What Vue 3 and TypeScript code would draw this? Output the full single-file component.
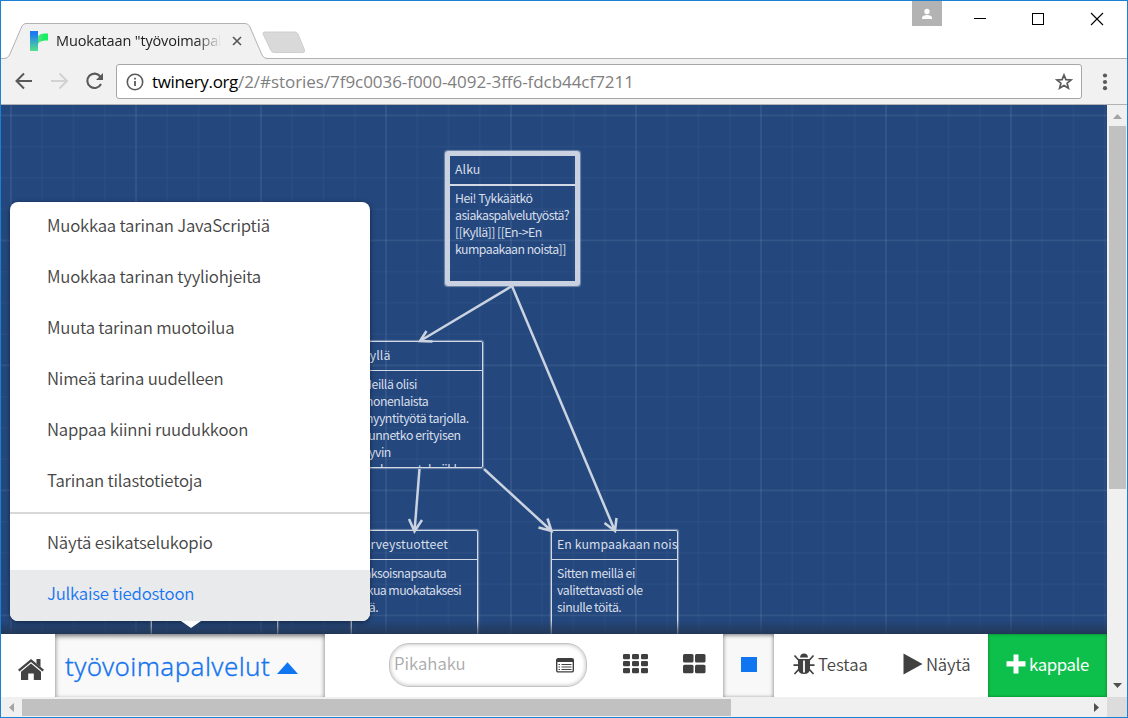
<script setup lang="ts">
interface MenuEntry {
  label: string
  active?: boolean
}

interface Passage {
  id: string
  title: string
  lines: string[]
}

const editEntries: MenuEntry[] = [
  { label: 'Muokkaa tarinan JavaScriptiä' },
  { label: 'Muokkaa tarinan tyyliohjeita' },
  { label: 'Muuta tarinan muotoilua' },
  { label: 'Nimeä tarina uudelleen' },
  { label: 'Nappaa kiinni ruudukkoon' },
  { label: 'Tarinan tilastotietoja' },
]

const outputEntries: MenuEntry[] = [
  { label: 'Näytä esikatselukopio' },
  { label: 'Julkaise tiedostoon', active: true },
]

const passages: Passage[] = [
  {
    id: 'start',
    title: 'Alku',
    lines: ['Hei! Tykkäätkö', 'asiakaspalvelutyöstä?', '[[Kyllä]] [[En->En', 'kumpaakaan noista]]'],
  },
  {
    id: 'yes',
    title: 'Kyllä',
    lines: ['Meillä olisi', 'monenlaista', 'myyntityötä tarjolla.', 'Tunnetko erityisen', 'hyvin', 'mukavuustekniikka'],
  },
  { id: 'health', title: 'Terveystuotteet', lines: ['Kaksoisnapsauta', 'lukua muokataksesi', 'sitä.'] },
  { id: 'neither', title: 'En kumpaakaan noista', lines: ['Sitten meillä ei', 'valitettavasti ole', 'sinulle töitä.'] },
  { id: 'hidden', title: '', lines: [] },
]

const links: string[] = [
  'M512 286L420 341M426.5 331L420 341L432.5 341.5',
  'M512 286L615 531M604.5 523L615 531L616.5 518',
  'M419.5 469L414.5 531.5M409 519L414.5 531.5L422 520',
  'M484 469L551.5 531M538.5 527.5L551.5 531L547.5 518.5',
]

const gridStep = 31.25
const columns = Array.from({ length: 36 }, (_, i) => ({ at: 11 + i * gridStep, major: i % 4 === 0 }))
const rows = Array.from({ length: 17 }, (_, i) => ({ at: 115.2 + i * gridStep, major: i % 4 === 0 }))
</script>

<template>
  <div class="window">
    <header class="titlebar">
      <svg class="tab-shape" width="310" height="58" viewBox="1 1 310 58">
        <path d="M1 59V58.5H4Q8 58.5 9.500 55L22 26Q23.500 23.500 26 23.500H245Q248 23.500 249.500 26L262 55Q264 58.500 267 58.500H311V59Z" fill="#f1f1f1" />
        <path d="M1 58.500H4Q8 58.500 9.500 55L22 26Q23.500 23.500 26 23.500H245Q248 23.500 249.500 26L262 55Q264 58.500 267 58.500H311" fill="none" stroke="#b2b2b2" />
        <path d="M265 32H295Q297 32 298 34L304.500 50Q305 52.500 303 52.500H274Q272 52.500 271 50.500L263 34Q262.500 32 265 32Z" fill="#d9d9d9" stroke="#cecece" />
      </svg>
      <div class="tab">
        <svg width="18" height="20" viewBox="0 0 18 20">
          <defs>
            <linearGradient id="stem" x1="0" y1="0" x2="0" y2="1"><stop offset="0.15" stop-color="#1d7bf2" /><stop offset="1" stop-color="#58e08c" /></linearGradient>
            <linearGradient id="branch" x1="0" y1="0" x2="1" y2="0"><stop offset="0" stop-color="#5ce08a" /><stop offset="0.6" stop-color="#17ef62" /></linearGradient>
          </defs>
          <path d="M0 0H8V20H0Z" fill="url(#stem)" />
          <path d="M8 5Q10 2.500 14 2.500H18V9.500H15Q9 10 8 13Z" fill="url(#branch)" />
        </svg>
        <span class="tab-title">Muokataan "työvoimapalvelut"</span>
        <svg class="tab-close" width="10" height="10" viewBox="0 0 10 10"><path d="M1 1L9 9M9 1L1 9" stroke="#555" stroke-width="1.600" /></svg>
      </div>
      <div class="window-buttons">
        <span class="profile">
          <svg width="30" height="25" viewBox="0 0 30 25"><circle cx="15" cy="10.500" r="2.700" fill="#fff" /><path d="M10 18V16.500Q10.500 14 15 14Q19.500 14 20 16.500V18Z" fill="#fff" /></svg>
        </span>
        <svg width="136" height="20" viewBox="972 8 136 20" shape-rendering="crispEdges">
          <path d="M974 18.500H986" stroke="#000" />
          <path d="M1032.500 13.500H1043.500V24.500H1032.500Z" fill="none" stroke="#000" />
          <path d="M1091 13L1103 25M1103 13L1091 25" stroke="#000" shape-rendering="auto" stroke-width="1.100" />
        </svg>
      </div>
    </header>

    <nav class="toolbar">
      <svg class="nav-icons" width="96" height="24" viewBox="12 70 96 24" fill="none">
        <path d="M32 81H17M24 73.500L16.500 81L24 88.500" stroke="#595959" stroke-width="2" />
        <path d="M51 81H66M59.500 73.500L67 81L59.500 88.500" stroke="#d2d2d2" stroke-width="2" />
        <path d="M100.300 76.500A7.200 7.200 0 1 0 101 84" stroke="#595959" stroke-width="2.100" />
        <path d="M103 73V80H96Z" fill="#595959" />
      </svg>
      <div class="address">
        <svg width="18" height="18" viewBox="0 0 18 18" fill="none" stroke="#5a5a5a"><circle cx="9" cy="9" r="7.700" stroke-width="1.600" /><path d="M9 8V13M9 4.800V6.600" stroke-width="1.800" /></svg>
        <span class="url"><span class="host">twinery.org</span>/2/#stories/7f9c0036-f000-4092-3ff6-fdcb44cf7211</span>
        <svg class="star" width="18" height="17" viewBox="0 0 18 17"><path d="M9 2L10.900 6.600L16 7L12.100 10.200L13.400 15.200L9 12.500L4.600 15.200L5.900 10.200L2 7L7.100 6.600Z" fill="none" stroke="#5a5a5a" stroke-width="1.700" /></svg>
      </div>
      <svg width="6" height="18" viewBox="0 0 6 18" fill="#5a5a5a"><circle cx="3" cy="2.500" r="2.100" /><circle cx="3" cy="9" r="2.100" /><circle cx="3" cy="15.200" r="2.100" /></svg>
    </nav>

    <div class="viewport">
      <main class="page">
        <section class="story-map">
          <svg class="layer" width="1106" height="529" viewBox="1 105 1106 529">
            <g v-for="c in columns" :key="'c' + c.at" :class="c.major ? 'major' : 'minor'">
              <rect :x="c.at - 1" y="105" width="2" height="529" />
            </g>
            <g v-for="r in rows" :key="'r' + r.at" :class="r.major ? 'major' : 'minor'">
              <rect x="1" :y="r.at - 0.7" width="1106" height="1.800" />
            </g>
          </svg>
          <article v-for="p in passages" :key="p.id" class="passage" :class="p.id">
            <h2>{{ p.title }}</h2>
            <p><span v-for="line in p.lines" :key="line">{{ line }}</span></p>
          </article>
          <svg class="layer" width="1106" height="529" viewBox="1 105 1106 529">
            <path v-for="d in links" :key="d" :d="d" class="link" />
          </svg>
          <div class="map-shade"></div>
        </section>

        <div class="menu">
          <ul>
            <li v-for="e in editEntries" :key="e.label">{{ e.label }}</li>
          </ul>
          <ul class="output">
            <li v-for="e in outputEntries" :key="e.label" :class="{ active: e.active }">{{ e.label }}</li>
          </ul>
        </div>

        <footer class="story-bar">
          <button class="home">
            <svg width="28" height="24" viewBox="17 658 28 24">
              <path d="M18 669.800L31 659L44 669.800L42.500 671.500L31 662L19.500 671.500Z" fill="#444" />
              <path d="M36.500 659H40.500V667L36.500 663.500Z" fill="#444" />
              <path d="M31 663.500L41 671.800V680H33.800V673.500H28.200V680H21V671.800Z" fill="#444" />
            </svg>
          </button>
          <button class="story-name">
            <span>työvoimapalvelut</span>
            <svg width="21" height="12" viewBox="0 0 22 12" preserveAspectRatio="none"><path d="M0 12L11 0.300L22 12Z" fill="#0f75f0" /></svg>
          </button>
          <div class="search">
            <span>Pikahaku</span>
            <svg width="18" height="15" viewBox="0 0 18 15">
              <rect x="0.700" y="0.700" width="16.600" height="13.200" rx="1.500" fill="#fff" stroke="#3f3f3f" stroke-width="1.400" />
              <path d="M0.500 1H17.500V4H0.500Z" fill="#3f3f3f" />
              <path d="M2.500 6.500H4M2.500 9H4M2.500 11.500H4M5.500 6.500H15.500M5.500 9H15.500M5.500 11.500H15.500" stroke="#444" stroke-width="1.200" />
            </svg>
          </div>
          <svg class="grid-small" width="25" height="20" viewBox="0 0 25 20" fill="#3f3f3f">
            <template v-for="y in [0, 7, 14]" :key="y">
              <rect v-for="x in [0, 9, 18]" :key="x" :x="x" :y="y" width="7" height="5.300" rx="1.200" />
            </template>
          </svg>
          <svg class="grid-medium" width="23" height="20" viewBox="0 0 23 20" fill="#3f3f3f">
            <template v-for="y in [0, 10.700]" :key="y">
              <rect v-for="x in [0, 12]" :key="x" :x="x" :y="y" width="10.500" height="8.500" rx="1.500" />
            </template>
          </svg>
          <button class="size-large"><i></i></button>
          <button class="test">
            <svg width="22" height="22" viewBox="0 0 22 22">
              <path d="M7 4.500Q7.300 0.500 11 0.500Q14.700 0.500 15 4.500Z" fill="#404040" />
              <path d="M5 6H17V15Q17 21 11 21Q5 21 5 15Z" fill="#404040" />
              <path d="M1.500 2.500L6 7.500M20.500 2.500L16 7.500M0.500 12.200H6M16 12.200H21.500M1.500 21L6 16M20.500 21L16 16" stroke="#404040" stroke-width="1.700" />
              <path d="M11 7.500V19.500" stroke="#fff" stroke-width="1.800" />
            </svg>
            <span>Testaa</span>
          </button>
          <button class="play">
            <svg width="20" height="22" viewBox="0 0 20 22"><path d="M0.500 0.500L19.500 11L0.500 21.500Z" fill="#404040" /></svg>
            <span>Näytä</span>
          </button>
          <button class="add">
            <svg width="20" height="20" viewBox="0 0 20 20"><path d="M7.500 0.500H12.500V7.300H19.500V12.500H12.500V19.500H7.500V12.500H0.500V7.300H7.500Z" fill="#fff" /></svg>
            <span>kappale</span>
          </button>
        </footer>
      </main>

      <aside class="scroll-y">
        <svg width="9" height="5" viewBox="0 0 9 5"><path d="M0 5L4.500 0L9 5Z" fill="#a3a3a3" /></svg>
        <div class="thumb"></div>
        <svg class="end" width="9" height="5" viewBox="0 0 9 5"><path d="M0 0H9L4.500 5Z" fill="#505050" /></svg>
      </aside>
    </div>

    <div class="scroll-x">
      <svg width="5" height="9" viewBox="0 0 5 9"><path d="M5 0V9L0 4.500Z" fill="#a3a3a3" /></svg>
      <div class="thumb"></div>
      <svg class="end" width="5" height="9" viewBox="0 0 5 9"><path d="M0 0V9L5 4.500Z" fill="#505050" /></svg>
      <div class="corner"></div>
    </div>
  </div>
</template>

<style>
body {
  margin: 0;
  overflow: hidden;
}
</style>

<style scoped>
* {
  box-sizing: border-box;
}

.window {
  width: 1128px;
  height: 718px;
  border: 1px solid #1c80d3;
  background: #fff;
  display: flex;
  flex-direction: column;
  font-family: "Noto Sans CJK SC", "Noto Sans", sans-serif;
  white-space: nowrap;
}

svg {
  display: block;
  flex: none;
}

button {
  border: 0;
  margin: 0;
  padding: 0;
  background: none;
  font: inherit;
  color: inherit;
}

.titlebar {
  position: relative;
  height: 58px;
  flex: none;
  display: flex;
  justify-content: space-between;
  border-bottom: 1px solid #b2b2b2;
}

.tab-shape {
  position: absolute;
  left: 0;
  top: 0;
}

.tab {
  position: relative;
  display: flex;
  align-items: center;
  width: 244px;
  height: 40px;
  margin: 20px 0 0 29px;
  font: 14.500px/20px "Open Sans", "Noto Sans", sans-serif;
  color: #222;
}

.tab-title {
  width: 164px;
  margin-left: 8px;
  overflow: hidden;
  letter-spacing: -0.150px;
  -webkit-mask-image: linear-gradient(90deg, #000 140px, transparent 166px);
  mask-image: linear-gradient(90deg, #000 140px, transparent 166px);
}

.tab-close {
  margin-left: 12px;
}

.window-buttons {
  display: flex;
  margin-right: 19px;
}

.window-buttons > svg {
  margin: 7px 0 0 30px;
}

.profile {
  width: 30px;
  height: 25px;
  background: #b3b3b3;
}

.toolbar {
  height: 46px;
  flex: none;
  display: flex;
  align-items: center;
  padding: 0 18px 0 11px;
  background: #f1f1f1;
  border-bottom: 1px solid #b2b2b2;
}

.address {
  width: 966px;
  height: 35px;
  margin: 0 20px 0 8px;
  padding: 0 8px 0 9px;
  display: flex;
  align-items: center;
  flex: none;
  background: #fff;
  border: 1px solid #a6a6a6;
  border-radius: 3px;
}

.url {
  margin-left: 8px;
  font: 17px/24px "Open Sans", "Noto Sans", sans-serif;
  letter-spacing: -0.050px;
  color: #808080;
}

.host {
  color: #000;
  letter-spacing: -0.350px;
}

.star {
  margin-left: auto;
}

.viewport {
  height: 592px;
  flex: none;
  display: flex;
}

.page {
  position: relative;
  width: 1106px;
  height: 592px;
}

.story-map {
  position: relative;
  height: 529px;
  overflow: hidden;
  background: #24487e;
}

.layer {
  position: absolute;
  left: 0;
  top: 0;
}

.major {
  fill: rgba(255, 255, 255, 0.07);
}

.minor {
  fill: rgba(255, 255, 255, 0.022);
}

.link {
  fill: none;
  stroke: #cbd3e1;
  stroke-width: 2.500px;
}

.passage {
  position: absolute;
  width: 127px;
  height: 127px;
  border: 1px solid #d3dae6;
  border-radius: 2px;
  box-shadow: 0 0 1px 0.500px rgba(255, 255, 255, 0.35);
  overflow: hidden;
  color: #d8dee9;
  font-size: 12.300px;
  line-height: 17px;
}

.passage h2 {
  height: 29px;
  margin: 0;
  padding: 3px 0 0 5px;
  border-bottom: 1px solid #d3dae6;
  font-size: 12.300px;
  font-weight: 400;
  line-height: 20px;
  letter-spacing: 0.080px;
}

.passage p {
  margin: 0;
  padding: 5px 0 0 5px;
  letter-spacing: -0.450px;
}

.passage p span {
  display: block;
}

.passage.start {
  left: 444px;
  top: 46px;
  width: 135px;
  height: 135px;
  border: 5px solid #cad2e1;
  border-radius: 3px;
}

.passage.start h2 {
  height: 30px;
  border-bottom-width: 2px;
}

.passage.start p {
  padding-top: 4px;
  letter-spacing: -0.530px;
}

.passage.yes {
  left: 355px;
  top: 236px;
}

.passage.health {
  left: 350px;
  top: 425px;
}

.passage.health p {
  letter-spacing: -0.560px;
}

.passage.neither {
  left: 550px;
  top: 425px;
}

.passage.hidden {
  left: 150px;
  top: 425px;
}

.map-shade {
  position: absolute;
  left: 0;
  right: 0;
  bottom: 0;
  height: 14px;
  background: linear-gradient(rgba(34, 50, 75, 0), rgba(34, 50, 75, 0.75));
}

.menu {
  position: absolute;
  left: 9px;
  top: 97px;
  width: 360px;
  height: 419px;
  border-radius: 8px;
  background: #fff;
  box-shadow: 0 1px 5px rgba(0, 0, 0, 0.5);
  color: #444;
  font-size: 16.800px;
  font-weight: 350;
}

.menu::after {
  content: "";
  position: absolute;
  left: 171px;
  top: 419px;
  border: 10px solid transparent;
  border-top: 7px solid #fff;
  border-bottom: 0;
}

.menu ul {
  margin: 0;
  padding: 0;
  list-style: none;
}

.menu ul.output {
  margin-top: 4px;
  padding-top: 5px;
  border-top: 2px solid #d8d8d8;
}

.menu li {
  height: 51px;
  padding-left: 37px;
  line-height: 46px;
  letter-spacing: -0.210px;
}

.menu li.active {
  background: #e9eaec;
  color: #1775f2;
  border-radius: 0 0 8px 8px;
}

.story-bar {
  height: 63px;
  display: flex;
  align-items: center;
  background: #fff;
  color: #444;
  font-size: 16.800px;
  font-weight: 350;
}

.home {
  width: 54px;
  padding: 8px 0 0 16px;
}

.story-name {
  width: 270px;
  height: 63px;
  display: flex;
  align-items: center;
  padding: 0 0 0 10px;
  background: #f9f9f9;
  box-shadow: inset 0 2px 5px rgba(0, 0, 0, 0.55);
  clip-path: inset(0);
  color: #1775ee;
}

.story-name span {
  font: 300 26px/36px "Noto Sans", "Open Sans", sans-serif;
  letter-spacing: 0.380px;
  -webkit-text-stroke: 0.300px #1775ee;
}

.story-name svg {
  margin: 5px 0 0 7px;
}

.search {
  width: 198px;
  height: 44px;
  margin: 0 0 2px 64px;
  padding: 0 12px 0 5px;
  display: flex;
  align-items: center;
  justify-content: space-between;
  border: 1px solid #c3c3c3;
  border-radius: 20px;
  box-shadow: inset 0 0 4px rgba(0, 0, 0, 0.3);
  color: #aaa;
}

.search span {
  margin: 0 0 4px -1px;
}

.search svg {
  margin-top: 1px;
}

.grid-small {
  margin: 0 0 3px 36px;
}

.grid-medium {
  margin: 0 0 3px 35px;
}

.size-large {
  width: 51px;
  height: 63px;
  margin-left: 17px;
  display: flex;
  align-items: center;
  justify-content: center;
  background: #f8f8f8;
  box-shadow: inset 0 1px 4px rgba(0, 0, 0, 0.55);
}

.size-large i {
  width: 16px;
  height: 15px;
  margin-bottom: 2px;
  background: #0f75f0;
}

.test,
.play {
  display: flex;
  align-items: center;
  gap: 3px;
  height: 59px;
  margin: 0 0 4px 19px;
}

.play {
  margin-left: 35px;
  letter-spacing: -0.150px;
}

.add {
  width: 119px;
  height: 63px;
  margin-left: auto;
  padding: 0 0 3px 18px;
  display: flex;
  align-items: center;
  gap: 3px;
  background: #0dbf4b;
  box-shadow: inset 0 0 3px rgba(0, 70, 20, 0.6);
  color: #fff;
  font-weight: 400;
  letter-spacing: -0.400px;
}

.scroll-y {
  width: 20px;
  height: 592px;
  background: #f0f0f0;
  display: flex;
  flex-direction: column;
  align-items: center;
  padding: 9px 0;
}

.scroll-y .thumb {
  width: 17px;
  height: 363px;
  margin-top: 7px;
  background: #c1c1c1;
}

.scroll-y .end,
.scroll-x .end {
  margin-top: auto;
}

.scroll-x {
  height: 20px;
  flex: none;
  display: flex;
  align-items: center;
  padding-left: 8px;
  background: #f0f0f0;
}

.scroll-x .thumb {
  width: 709px;
  height: 17px;
  margin-left: 8px;
  background: #c1c1c1;
}

.scroll-x .end {
  margin: 0 8px 0 auto;
}

.corner {
  width: 20px;
  height: 20px;
  background: #dcdcdc;
}
</style>
